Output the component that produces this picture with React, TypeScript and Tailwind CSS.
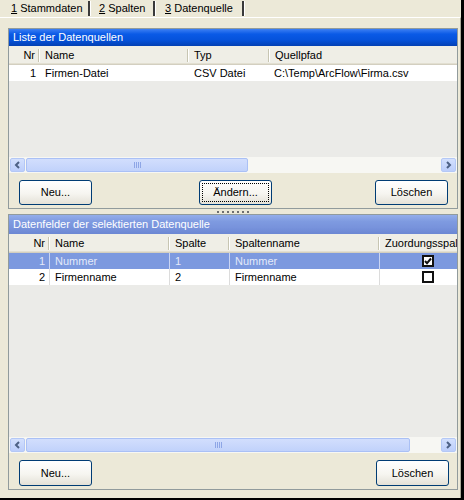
import React from "react";

type Col = { label: string; cls: string; right?: boolean };

const quellCols: Col[] = [
  { label: "Nr", cls: "w-[31px]", right: true },
  { label: "Name", cls: "w-[149px]" },
  { label: "Typ", cls: "w-[81px]" },
  { label: "Quellpfad", cls: "flex-1" },
];

const feldCols: Col[] = [
  { label: "Nr", cls: "w-[41px]", right: true },
  { label: "Name", cls: "w-[120px]" },
  { label: "Spalte", cls: "w-[60px]" },
  { label: "Spaltenname", cls: "w-[150px]" },
  { label: "Zuordungsspalte", cls: "flex-1" },
];

const felder = [
  { nr: "1", name: "Nummer", spalte: "1", spaltenname: "Nummer", checked: true, selected: true },
  { nr: "2", name: "Firmenname", spalte: "2", spaltenname: "Firmenname", checked: false, selected: false },
];

const TabSep = () => <span className="h-[15px] w-[2px] bg-[#3a3a3a] shadow-[1px_0_0_#ffffff]" />;

const TabStrip = () => (
  <div className="flex h-[17px] items-center text-black">
    <span className="w-[88px] whitespace-nowrap pl-[11px]">
      <u>1</u> Stammdaten
    </span>
    <TabSep />
    <span className="w-[63px] whitespace-nowrap pl-[9px]">
      <u>2</u> Spalten
    </span>
    <TabSep />
    <span className="w-[87px] whitespace-nowrap pl-[10px]">
      <u>3</u> Datenquelle
    </span>
    <TabSep />
  </div>
);

const ColumnHeader = ({ cols }: { cols: Col[] }) => (
  <div className="flex h-[19px] shrink-0 bg-[#efeee6] shadow-[inset_0_-1px_0_#d3cfc0,inset_0_-2px_0_#e2dfd1]">
    {cols.map((c, i) => (
      <div key={i} className={`flex items-center overflow-hidden ${c.cls}`}>
        <span
          className={`flex flex-1 overflow-hidden whitespace-nowrap pb-[1px] ${
            c.right ? "justify-end pr-[3px]" : "pl-[5px]"
          }`}
        >
          {c.label}
        </span>
        {i < cols.length - 1 && (
          <span className="h-[13px] w-[2px] shrink-0 border-l border-r border-l-[#c7c5b2] border-r-white" />
        )}
      </div>
    ))}
  </div>
);

const Arrow = ({ dir }: { dir: "left" | "right" }) => (
  <div className="flex h-full w-[15px] shrink-0 items-center justify-center rounded-[2px] border border-[#b4c8f6] bg-[linear-gradient(to_bottom,#d3e0fd,#bccefb)]">
    <svg width="7" height="8" viewBox="0 0 7 8">
      <path
        d={dir === "left" ? "M5 1 L2 4 L5 7" : "M2 1 L5 4 L2 7"}
        fill="none"
        stroke="#4d6185"
        strokeWidth="2"
      />
    </svg>
  </div>
);

const Scrollbar = ({ thumb }: { thumb: string }) => (
  <div className="flex h-[16px] shrink-0 items-stretch bg-[#f7f7f3] px-[1px] py-[1px]">
    <Arrow dir="left" />
    <div className="flex flex-1 items-stretch py-0 pl-[1px]">
      <div
        className={`flex items-center justify-center gap-[1px] rounded-[2px] border border-[#aac0f5] bg-[linear-gradient(to_bottom,#d2defd,#c1d2fb)] ${thumb}`}
      >
        <span className="h-[6px] w-[1px] bg-[#8ea6e6]" />
        <span className="h-[6px] w-[1px] bg-[#8ea6e6]" />
        <span className="h-[6px] w-[1px] bg-[#8ea6e6]" />
        <span className="h-[6px] w-[1px] bg-[#8ea6e6]" />
      </div>
    </div>
    <Arrow dir="right" />
  </div>
);

const XPButton = ({ label, focus, className }: { label: string; focus?: boolean; className?: string }) => (
  <div
    className={`flex w-[73px] items-center justify-center rounded-[3px] border border-[#003c74] bg-[linear-gradient(to_bottom,#ffffff_0%,#f6f5f0_55%,#e4e1d7_100%)] p-[2px] ${className}`}
  >
    <div
      className={`flex h-full w-full items-center justify-center ${
        focus ? "border border-dotted border-black" : ""
      }`}
    >
      {label}
    </div>
  </div>
);

const Checkbox = ({ checked }: { checked: boolean }) => (
  <span className="flex h-[12px] w-[12px] items-center justify-center border-2 border-[#111] bg-white">
    {checked && (
      <svg width="8" height="8" viewBox="0 0 8 8">
        <path d="M1 4 L3 6.2 L7 1.5" fill="none" stroke="#111" strokeWidth="2" />
      </svg>
    )}
  </span>
);

const Panel = ({
  title,
  active,
  className,
  children,
}: {
  title: string;
  active?: boolean;
  className: string;
  children: React.ReactNode;
}) => (
  <div className={`flex flex-col border border-[#919b9c] ${className}`}>
    <div
      className={`flex shrink-0 items-center pl-[4px] text-white ${
        active
          ? "h-[17px] bg-[linear-gradient(to_bottom,#3d80f3_0%,#0a5ae6_30%,#0552db_65%,#0340b3_100%)]"
          : "h-[19px] bg-[linear-gradient(to_bottom,#94aeea_0%,#7e9ae0_35%,#7893dc_65%,#6b87d3_100%)]"
      }`}
    >
      {title}
    </div>
    {children}
  </div>
);

export default function App() {
  return (
    <div className="flex h-[500px] w-[464px] flex-col overflow-hidden border-b-2 border-r-[3px] border-black bg-[#ece9d8] font-['Liberation_Sans',Arial,sans-serif] text-[11px] text-black">
      <TabStrip />
      <div className="flex flex-1 flex-col border-r border-t border-r-[#aca899] border-t-white pl-[8px] pr-[2px] pt-[10px]">
        <Panel title="Liste der Datenquellen" active className="h-[181px]">
          <div className="flex flex-1 flex-col overflow-hidden bg-[#ebebe8]">
            <ColumnHeader cols={quellCols} />
            <div className="flex h-[16px] items-center bg-white">
              <span className="w-[31px] pr-[4px] text-right">1</span>
              <span className="w-[149px] pl-[5px]">Firmen-Datei</span>
              <span className="w-[81px] pl-[5px]">CSV Datei</span>
              <span className="flex-1 pl-[4px]">C:\Temp\ArcFlow\Firma.csv</span>
            </div>
          </div>
          <Scrollbar thumb="w-[222px]" />
          <div className="flex h-[35px] shrink-0 items-start pt-[7px]">
            <XPButton label="Neu..." className="ml-[10px] h-[25px]" />
            <XPButton label="Ändern..." focus className="ml-[107px] h-[25px]" />
            <XPButton label="Löschen" className="ml-auto mr-[9px] h-[25px]" />
          </div>
        </Panel>

        <div className="flex h-[5px] shrink-0 items-center justify-center gap-[3px]">
          {Array.from({ length: 7 }).map((_, i) => (
            <span key={i} className="mt-[1px] h-[2px] w-[2px] bg-[#6e6e6e]" />
          ))}
        </div>

        <Panel title="Datenfelder der selektierten Datenquelle" className="h-[276px]">
          <div className="flex flex-1 flex-col overflow-hidden bg-[#ebebe8]">
            <ColumnHeader cols={feldCols} />
            {felder.map((f) => {
              const line = f.selected ? "border-r border-[#c9d5f3]" : "border-r border-[#dcdcdc]";
              return (
                <div
                  key={f.nr}
                  className={`flex h-[16px] items-stretch ${
                    f.selected ? "bg-[#7c99df] text-[#e3e9f9]" : "bg-white text-black"
                  }`}
                >
                  <span className={`flex w-[41px] items-center justify-end pr-[4px] ${line}`}>{f.nr}</span>
                  <span className={`flex w-[120px] items-center pl-[5px] ${line}`}>{f.name}</span>
                  <span className={`flex w-[60px] items-center pl-[5px] ${line}`}>{f.spalte}</span>
                  <span className={`flex w-[150px] items-center pl-[5px] ${line}`}>{f.spaltenname}</span>
                  <span className="flex flex-1 items-center pl-[42px]">
                    <Checkbox checked={f.checked} />
                  </span>
                </div>
              );
            })}
          </div>
          <Scrollbar thumb="w-[384px]" />
          <div className="flex h-[36px] shrink-0 items-start pt-[7px]">
            <XPButton label="Neu..." className="ml-[10px] h-[26px]" />
            <XPButton label="Löschen" className="ml-auto mr-[8px] h-[26px]" />
          </div>
        </Panel>
      </div>
    </div>
  );
}
